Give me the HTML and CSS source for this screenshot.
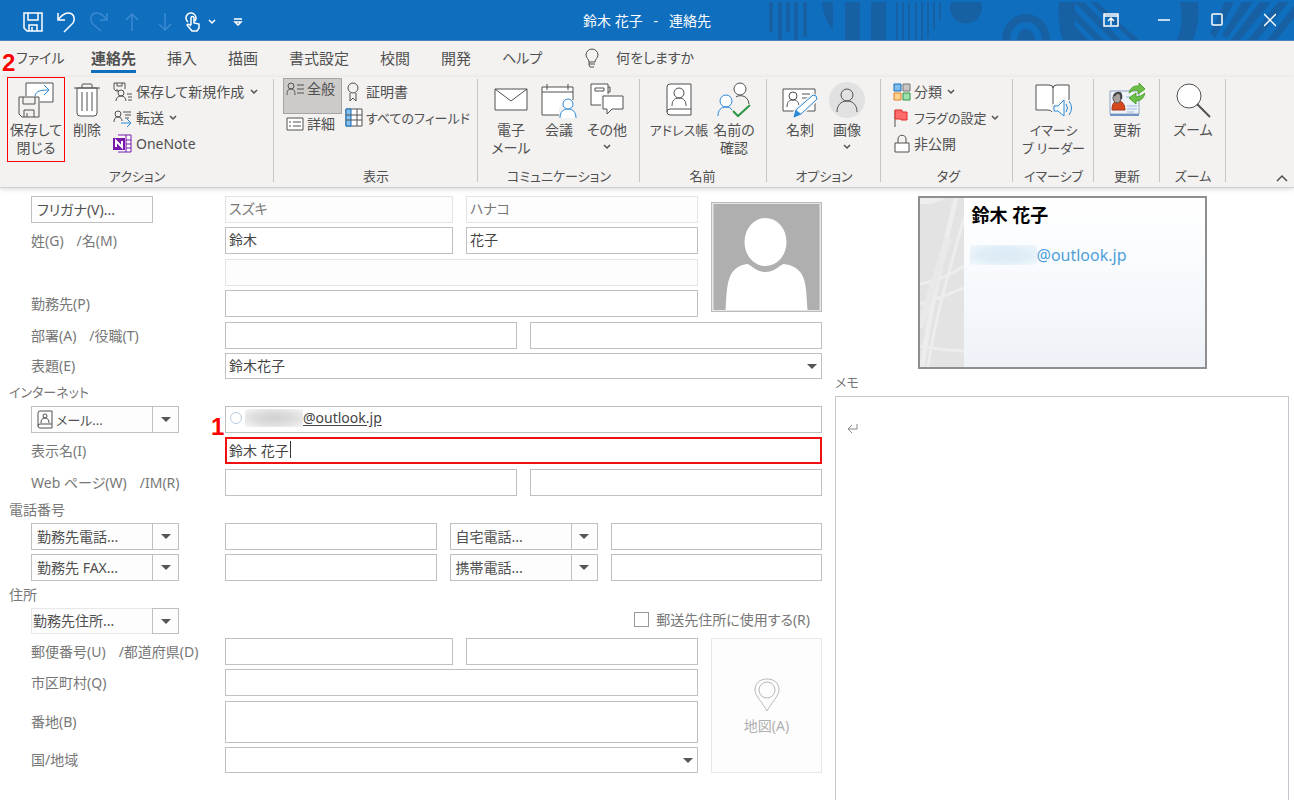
FILE: index.html
```html
<!DOCTYPE html>
<html lang="ja">
<head>
<meta charset="utf-8">
<title>鈴木 花子 - 連絡先</title>
<link rel="stylesheet" href="styles.css">
</head>
<body>
<header class="titlebar">
  <svg class="titlebar-art" width="534" height="40" viewBox="0 0 534 40" aria-hidden="true">
    <g fill="#1660a3">
      <path d="M9 2h4v30h-4zM18 2h4v38h-4zM26 2h4v30h-4zM34 2h4v38h-4zM43 2h4v35h-4z"/>
      <path d="M62 2h11v28C66 22 63 12 62 2z"/>
      <path d="M85 2h15v38H85zM111 2h15v38h-15z"/>
      <path d="M136 2h2v38h-2zM142 2h2v38h-2zM148 2h2v38h-2zM155 2h2v38h-2zM161 2h2v38h-2zM167 2h2v36h-2zM173 2h2v28h-2zM179 2h2v16l-2 3z"/>
      <path d="M191 2h30a16 16 0 1 1-30 0z"/>
      <path d="M242 40a24 26 0 0 1 48 0h-8a16 18 0 0 0-32 0z"/>
      <path d="M257 40a9 11 0 0 1 18 0z"/>
      <path d="M299 2h16v38h-12C298 28 298 14 299 2z"/>
      <path d="M315 2h9l37 38h-9l-37-37zM330 2h7l42 38h-8zM315 11l29 29h-9l-20-20zM315 26l13 14h-13z"/>
      <path d="M420 2h18c1 14 0 26-5 38h-16c5-12 6-24 3-38z"/>
      <path d="M465 2h9l-19 36-5-5zM482 2h11l-26 36-5-3zM500 2h11l-31 38h-9zM518 2h11l-32 38h-9zM534 6v12l-18 22h-9z"/>
    </g>
  </svg>
  <div class="qat">
    <button class="qat-btn save-btn" aria-label="上書き保存"><svg width="20" height="20" viewBox="0 0 20 20"><path d="M1 1h18v18H4l-3-3zM5 1v7h10V1M6 19v-6h8v6M9 15v4"/></svg></button>
    <button class="qat-btn" aria-label="元に戻す"><svg width="20" height="22" viewBox="0 0 20 22"><path d="M2 2v7h7M2 9C5 5 8 2 12 2c7 0 8 8 3 12l-7 7"/></svg></button>
    <button class="qat-btn off" aria-label="やり直し"><svg width="20" height="22" viewBox="0 0 20 22"><path d="M18 2v7h-7M18 9C15 5 12 2 8 2 1 2 0 10 5 14l7 6"/></svg></button>
    <button class="qat-btn off" aria-label="前のアイテム"><svg width="16" height="20" viewBox="0 0 16 20"><path d="M8 19V2M2 8l6-6 6 6"/></svg></button>
    <button class="qat-btn off" aria-label="次のアイテム"><svg width="16" height="20" viewBox="0 0 16 20"><path d="M8 1v17M2 12l6 6 6-6"/></svg></button>
    <button class="qat-btn touch" aria-label="タッチ/マウス モードの切り替え"><svg width="16" height="20" viewBox="0 0 16 20"><path d="M3 10a5 5 0 1 1 7-1M6 13V6c0-2 3-2 3 0v5l5 1v4l-2 3H7l-5-6c1-2 3 0 4 1"/></svg></button>
    <button class="qat-btn tiny" aria-label="タッチ オプション"><svg width="8" height="6" viewBox="0 0 8 6"><path d="M1 1l3 3 3-3"/></svg></button>
    <button class="qat-btn custom" aria-label="カスタマイズ"><svg width="10" height="8" viewBox="0 0 10 8"><path d="M1 1h8M2 4h6L5 7z"/></svg></button>
  </div>
  <h1 class="window-title">鈴木 花子&nbsp;&nbsp; -&nbsp;&nbsp; 連絡先</h1>
  <div class="window-controls">
    <button class="win-btn" aria-label="リボンの表示オプション"><svg width="16" height="14" viewBox="0 0 16 14"><path d="M1 1h14v12H1zM1 3h14M8 12V5M5 8l3-3 3 3"/></svg></button>
    <button class="win-btn" aria-label="最小化"><svg width="12" height="14" viewBox="0 0 12 14"><path d="M0 7h12"/></svg></button>
    <button class="win-btn" aria-label="最大化"><svg width="12" height="14" viewBox="0 0 12 14"><rect x="1" y="1" width="10" height="11" rx="1"/></svg></button>
    <button class="win-btn" aria-label="閉じる"><svg width="12" height="14" viewBox="0 0 12 14"><path d="M0 1l12 12M12 1L0 13"/></svg></button>
  </div>
</header>

<nav class="tabs">
  <span class="mark">2</span>
  <button class="tab file">ファイル</button>
  <button class="tab active">連絡先</button>
  <button class="tab">挿入</button>
  <button class="tab">描画</button>
  <button class="tab">書式設定</button>
  <button class="tab">校閲</button>
  <button class="tab">開発</button>
  <button class="tab help">ヘルプ</button>
  <button class="tell-me"><svg width="14" height="20" viewBox="0 0 14 20"><path d="M4 14c0-3-3-4-3-7a6 6 0 0 1 12 0c0 3-3 4-3 7zM4 16h6M5 19h4M4 14v3l1 2"/></svg>何をしますか</button>
</nav>

<section class="ribbon">
  <div class="group g-action">
    <div class="group-body">
      <button class="big save"><svg width="36" height="36" viewBox="0 0 36 36"><path fill="#fff" d="M8 14V1h27v19H22"/><path class="blue" d="M17 14c1-5 5-6 14-6M26 3l5 5-5 5"/><path fill="#f3f2f0" d="M1 15h20v20H4l-3-3z"/><path d="M5 15v7h12v-7M6 35v-7h10v7M9 31v4"/></svg><span>保存して<br>閉じる</span></button>
      <button class="big delete"><svg width="26" height="36" viewBox="0 0 26 36"><path fill="#fff" d="M3 6h20v25q0 3-3 3H6q-3 0-3-3z"/><path d="M0 6h26M8 6V3q0-1 1-1h8q1 0 1 1v3M8 10v19M13 10v19M18 10v19"/></svg><span>削除</span></button>
      <div class="stack">
        <button class="small"><svg width="20" height="20" viewBox="0 0 20 20"><path d="M6 9H3L1 7V1h11v6M4 1v3h5V1M4 9V7"/><circle cx="8" cy="11" r="3"/><path d="M3 19c0-3 2-5 5-5s5 2 5 5M14 12h5M15 15h4M15 18h4"/></svg>保存して新規作成<svg class="chev far" viewBox="0 0 8 6"><path d="M1 1l3 3 3-3"/></svg></button>
        <button class="small"><svg width="20" height="20" viewBox="0 0 20 20"><circle cx="5" cy="6" r="3"/><path d="M1 14c0-3 1-5 4-5s4 2 4 4M10 4h8M12 7h6M12 10h4"/><path class="blue" d="M8 15h10M14 11l4 4-4 4"/></svg>転送<svg class="chev" viewBox="0 0 8 6"><path d="M1 1l3 3 3-3"/></svg></button>
        <button class="small"><svg width="20" height="20" viewBox="0 0 20 20"><path stroke="#7719aa" fill="#fff" d="M5 1h13v17H5M13 6h5M13 10h5M13 14h5M13 1v17"/><path fill="#7719aa" stroke="none" d="M0 4h12v12H0z"/><path stroke="#fff" stroke-width="2" d="M3 13V7l6 6V7"/></svg>OneNote</button>
      </div>
    </div>
    <div class="group-name">アクション</div>
  </div>
  <div class="group g-show">
    <div class="group-body">
      <div class="view-stack">
        <button class="small view selected"><svg width="18" height="16" viewBox="0 0 18 16"><circle cx="5" cy="5" r="3"/><path d="M1 14c0-4 1-6 4-6s4 2 4 6M11 4h7M11 8h7M11 12h7"/></svg>全般</button>
        <button class="small view"><svg width="18" height="16" viewBox="0 0 18 16"><path fill="#fff" d="M1 2h16v12H1z"/><path d="M3 6h2M7 6h8M3 10h2M7 10h8"/></svg>詳細</button>
      </div>
      <div class="stack">
        <button class="small"><svg width="18" height="20" viewBox="0 0 18 20"><circle cx="8" cy="6" r="5"/><path d="M5 11v8l3-3 3 3v-8"/></svg>証明書</button>
        <button class="small kana"><svg width="18" height="20" viewBox="0 0 18 20"><path fill="#fff" d="M1 1h16v17H1z"/><path fill="#83beec" stroke="#106ebe" d="M1 1h5v17H1z"/><path d="M1 7h16M1 12h16M12 1v17"/></svg>すべてのフィールド</button>
      </div>
    </div>
    <div class="group-name">表示</div>
  </div>
  <div class="group g-comm">
    <div class="group-body">
      <button class="big w48"><svg width="34" height="36" viewBox="0 0 34 36"><path fill="#fff" d="M1 7h32v21H1z"/><path d="M1 7l16 12L33 7"/></svg><span>電子<br>メール</span></button>
      <button class="big w48"><svg width="36" height="36" viewBox="0 0 36 36"><path fill="#fff" d="M1 5h31v28H1z"/><path d="M1 10h31M6 2v6M27 2v6"/><path fill="#f3f2f0" stroke="none" d="M18 36V26l5-8h13v18z"/><path class="blue" fill="#fff" d="M19 36c0-6 3-9 8-9s8 3 8 9"/><circle class="blue" fill="#fff" cx="27" cy="22" r="5"/></svg><span>会議</span></button>
      <button class="big w48"><svg width="34" height="36" viewBox="0 0 34 36"><path fill="#fff" d="M1 2h17v21H1z"/><path d="M5 6h9v3H5zM20 5v5M18 5h2M18 10h2"/><path stroke="#f3f2f0" stroke-width="4" fill="#fff" d="M13 14h20v13H22l-5 5v-5h-4z"/><path fill="#fff" d="M13 14h20v13H22l-5 5v-5h-4z"/></svg><span>その他</span><svg class="chev" viewBox="0 0 8 6"><path d="M1 1l3 3 3-3"/></svg></button>
    </div>
    <div class="group-name">コミュニケーション</div>
  </div>
  <div class="group g-name">
    <div class="group-body">
      <button class="big w64 kana"><svg width="26" height="36" viewBox="0 0 26 36"><path fill="#fff" d="M4 2h21v31H4q-3 0-3-3V5q0-3 3-3z"/><path d="M1 30q0-3 3-3h21"/><circle cx="13" cy="11" r="5"/><path d="M6 24c0-5 2-8 7-8s7 3 7 8"/></svg><span>アドレス帳</span></button>
      <button class="big w46"><svg width="34" height="36" viewBox="0 0 34 36"><circle fill="#fff" cx="23" cy="7" r="6"/><path d="M19 15c2-2 12-3 13 7"/><circle class="blue" fill="#fff" cx="9" cy="19" r="6"/><path class="blue" d="M1 34c0-6 3-9 8-9 3 0 5 1 6 3"/><path stroke="#2e9547" stroke-width="2" d="M16 29l5 5 12-11"/></svg><span>名前の<br>確認</span></button>
    </div>
    <div class="group-name">名前</div>
  </div>
  <div class="group g-option">
    <div class="group-body">
      <button class="big w48"><svg width="36" height="36" viewBox="0 0 36 36"><path fill="#fff" d="M1 7h32v22H1z"/><circle cx="11" cy="14" r="4"/><path d="M5 25c0-5 2-7 6-7s6 2 6 7M20 12h8M20 16h6"/><path stroke="#f3f2f0" stroke-width="4" d="M12 35l2-7 17-15 4 4-16 15z"/><path class="blue" fill="#fff" d="M12 35l2-7 17-15q4 0 4 4L19 32z"/><path fill="#2b88d8" stroke="none" d="M12 35l2-7 5 4z"/></svg><span>名刺</span></button>
      <button class="big w46"><svg width="38" height="36" viewBox="0 0 38 36"><circle fill="#e1e1e1" stroke="none" cx="19" cy="18" r="18"/><circle cx="19" cy="13" r="6"/><path d="M9 30c0-7 4-11 10-11s10 4 10 11"/></svg><span>画像</span><svg class="chev" viewBox="0 0 8 6"><path d="M1 1l3 3 3-3"/></svg></button>
    </div>
    <div class="group-name">オプション</div>
  </div>
  <div class="group g-tag">
    <div class="group-body">
      <div class="stack">
        <button class="small"><svg width="18" height="20" viewBox="0 0 18 20"><path fill="#83beec" stroke="#106ebe" d="M1 2h7v7H1z"/><path fill="#c8c6c4" stroke="#797775" d="M10 2h7v7h-7z"/><path fill="#ffd590" stroke="#e97b27" d="M1 11h7v7H1z"/><path fill="#a1dfb0" stroke="#2e9547" d="M10 11h7v7h-7z"/></svg>分類<svg class="chev" viewBox="0 0 8 6"><path d="M1 1l3 3 3-3"/></svg></button>
        <button class="small kana"><svg width="18" height="20" viewBox="0 0 18 20"><path d="M2 2v17"/><path fill="#ff6b6b" stroke="#e02b2b" d="M2 2h7v2h5v8H8v-1H2z"/></svg>フラグの設定<svg class="chev" viewBox="0 0 8 6"><path d="M1 1l3 3 3-3"/></svg></button>
        <button class="small"><svg width="18" height="20" viewBox="0 0 18 20"><path fill="#fff" d="M2 9h14v9H2z"/><path d="M5 9V5c0-5 8-5 8 0v4"/></svg>非公開</button>
      </div>
    </div>
    <div class="group-name">タグ</div>
  </div>
  <div class="group g-reader center">
    <div class="group-body">
      <button class="big kana"><svg width="38" height="36" viewBox="0 0 38 36"><path fill="#fff" d="M18 30q-1-2-4-2H2V3h13q4 0 4 3 0-3 4-3h12v15"/><path d="M19 5v18"/><path stroke="#f3f2f0" stroke-width="4" d="M20 24h4l6-6v16l-6-5h-4z"/><path class="blue" fill="#fff" d="M20 24h4l6-6v16l-6-5h-4z"/><path class="blue" d="M32 22q3 4 0 8M35 19q5 7 0 14"/></svg><span>イマーシ<br>ブ リーダー</span></button>
    </div>
    <div class="group-name">イマーシブ</div>
  </div>
  <div class="group g-update center">
    <div class="group-body">
      <button class="big"><svg width="36" height="36" viewBox="0 0 36 36"><path fill="#eef3fa" stroke="#8fa3bd" d="M1 9h29v23H1z"/><path stroke="#6f93c4" stroke-width="2" d="M1 33h29"/><path fill="#d6491f" stroke="#a6330f" d="M3 28c0-6 2-9 6-9s7 3 7 9z"/><ellipse fill="#a9a19c" stroke="#555" cx="8" cy="16" rx="4" ry="5"/><path stroke="#444" stroke-width="2" d="M5 14q2-4 6-3 2 2 1 6"/><path stroke="#9db7dd" d="M17 15h4M18 24h10M18 27h10M18 30h7"/><path fill="#6cc04a" stroke="#4fa32f" d="M20 11q2-8 10-7V1l6 6-7 5V8q-5-1-9 3z"/><path fill="#6cc04a" stroke="#4fa32f" d="M36 11q-2 8-9 8v3l-7-6 7-5v4q5 0 9-4z"/></svg><span>更新</span></button>
    </div>
    <div class="group-name">更新</div>
  </div>
  <div class="group g-zoom center">
    <div class="group-body">
      <button class="big"><svg width="36" height="36" viewBox="0 0 36 36"><circle fill="#fff" cx="14" cy="14" r="12"/><path stroke-width="2" d="M22 22l13 13"/></svg><span>ズーム</span></button>
    </div>
    <div class="group-name">ズーム</div>
  </div>
  <button class="collapse" aria-label="リボンを折りたたむ"><svg width="12" height="8" viewBox="0 0 12 8"><path d="M1 7l5-5 5 5"/></svg></button>
</section>

<main class="contact">
  <form class="form">
    <div class="name-block">
      <div class="name-rows">
        <div class="row">
          <div class="label"><button type="button" class="push">フリガナ(V)...</button></div>
          <div class="fields two"><input class="box dim" aria-label="姓のフリガナ" value="スズキ" readonly><input class="box dim" aria-label="名のフリガナ" value="ハナコ" readonly></div>
        </div>
        <div class="row">
          <div class="label"><label for="sei">姓(G)</label><label for="mei">/名(M)</label></div>
          <div class="fields two"><input class="box" id="sei" value="鈴木"><input class="box" id="mei" value="花子"></div>
        </div>
        <div class="row loose">
          <div class="label"></div>
          <div class="fields"><input class="box dim" aria-label="会社名フリガナ" readonly></div>
        </div>
        <div class="row">
          <div class="label"><label for="company">勤務先(P)</label></div>
          <div class="fields"><input class="box" id="company"></div>
        </div>
      </div>
      <button type="button" class="photo" aria-label="連絡先の写真"><svg viewBox="0 0 106 106"><path fill="#afafaf" d="M0 0h106v106H0z"/><ellipse fill="#fff" cx="52" cy="38" rx="21" ry="24"/><path fill="#fff" d="M12 106c1-14 1-24 4-32 3-9 10-13 18-14 5 2 9 8 18 8s13-6 18-8c9 1 17 5 20 14 3 8 3 18 4 32z"/></svg></button>
    </div>
    <div class="row loose">
      <div class="label"><label for="dept">部署(A)</label><label for="job">/役職(T)</label></div>
      <div class="fields two"><input class="box" id="dept"><input class="box" id="job"></div>
    </div>
    <div class="row short">
      <div class="label"><label for="fileas">表題(E)</label></div>
      <div class="fields drop"><select class="box" id="fileas"><option>鈴木花子</option></select></div>
    </div>

    <h2 class="section kana">インターネット</h2>
    <div class="row first">
      <div class="label"><button type="button" class="push kana"><svg width="16" height="20" viewBox="0 0 16 20"><path d="M3 1h12v17H3q-2 0-2-2V3q0-2 2-2zM1 16q0-2 2-2h12"/><circle cx="8" cy="6" r="2"/><path d="M4 13c0-3 1-5 4-5s4 2 4 5"/></svg>メール...</button><button type="button" class="arrow" aria-label="メールの種類"></button></div>
      <div class="fields"><div class="box mail"><span class="presence"></span><span class="smudge"></span><a href="#">@outlook.jp</a></div></div>
    </div>
    <div class="row">
      <div class="label"><label for="display">表示名(I)</label></div>
      <div class="fields"><span class="mark">1</span><div class="box focus"><input id="display" value="鈴木 花子"><span class="caret"></span></div></div>
    </div>
    <div class="row loose">
      <div class="label"><label for="web">Web ページ(W)</label><label for="im">/IM(R)</label></div>
      <div class="fields two"><input class="box" id="web"><input class="box" id="im"></div>
    </div>

    <h2 class="section">電話番号</h2>
    <div class="row first">
      <div class="label"><button type="button" class="push">勤務先電話...</button><button type="button" class="arrow" aria-label="電話の種類 1"></button></div>
      <div class="fields phones"><input class="box" aria-label="勤務先電話"><div class="split"><button type="button" class="push">自宅電話...</button><button type="button" class="arrow" aria-label="電話の種類 2"></button></div><input class="box" aria-label="自宅電話"></div>
    </div>
    <div class="row">
      <div class="label"><button type="button" class="push">勤務先 FAX...</button><button type="button" class="arrow" aria-label="電話の種類 3"></button></div>
      <div class="fields phones"><input class="box" aria-label="勤務先 FAX"><div class="split"><button type="button" class="push">携帯電話...</button><button type="button" class="arrow" aria-label="電話の種類 4"></button></div><input class="box" aria-label="携帯電話"></div>
    </div>

    <h2 class="section">住所</h2>
    <div class="row short first">
      <div class="label"><button type="button" class="push flat">勤務先住所...</button><button type="button" class="arrow" aria-label="住所の種類"></button></div>
      <div class="fields mailing"><input type="checkbox" id="mailing"><label for="mailing">郵送先住所に使用する(R)</label></div>
    </div>
    <div class="address-block">
      <div class="name-rows">
        <div class="row">
          <div class="label"><label for="zip">郵便番号(U)</label><label for="pref">/都道府県(D)</label></div>
          <div class="fields two"><input class="box" id="zip"><input class="box" id="pref"></div>
        </div>
        <div class="row">
          <div class="label"><label for="city">市区町村(Q)</label></div>
          <div class="fields"><input class="box" id="city"></div>
        </div>
        <div class="row tall loose">
          <div class="label"><label for="street">番地(B)</label></div>
          <div class="fields"><textarea class="box" id="street"></textarea></div>
        </div>
        <div class="row short">
          <div class="label"><label for="country">国/地域</label></div>
          <div class="fields drop"><select class="box" id="country"><option></option></select></div>
        </div>
      </div>
      <button type="button" class="map" disabled><svg width="26" height="34" viewBox="0 0 26 34"><path d="M13 33C9 25 1 18 1 12 1 5 6 1 13 1s12 4 12 11c0 6-8 13-12 21z"/><circle cx="13" cy="12" r="8"/></svg>地図(A)</button>
    </div>
  </form>

  <aside class="side">
    <div class="card">
      <svg class="card-art" viewBox="0 0 44 169" preserveAspectRatio="none" aria-hidden="true"><path fill="#e3e3e4" d="M0 0h44v169H0z"/><g fill="none" stroke="#ededee"><path stroke-width="5" d="M36 0C24 50 10 110 2 169" /><path stroke-width="3" d="M44 20C30 70 15 120 8 169M0 86q24-4 44-18M0 106q20-6 44-16M0 148q20 4 44 5"/><path stroke-width="7" stroke="#e9e9ea" d="M28 40L0 130"/></g><path fill="#eeeeef" d="M0 0h26L12 6H0z"/></svg>
      <div class="card-text">
        <div class="card-name">鈴木 花子</div>
        <div class="card-mail"><span class="smudge"></span>@outlook.jp</div>
      </div>
    </div>
    <label class="memo-label kana" for="memo">メモ</label>
    <div class="memo-wrap">
      <textarea class="memo" id="memo"></textarea>
      <svg class="return" width="12" height="10" viewBox="0 0 12 10"><path d="M10 0v5H1M5 1L1 5l4 4"/></svg>
    </div>
  </aside>
</main>
</body>
</html>
```
FILE: styles.css
```css
* { box-sizing: border-box; }

body {
  margin: 0;
  min-height: 100vh;
  display: flex;
  flex-direction: column;
  background: #fff;
  color: #505050;
  font: 14px/18px "Noto Sans", "Noto Sans CJK JP", sans-serif;
  font-feature-settings: "palt";
}

button, input, select, textarea {
  font: inherit;
  font-feature-settings: inherit;
  color: inherit;
  margin: 0;
}

button {
  border: 0;
  padding: 0;
  background: none;
  white-space: nowrap;
}

svg { fill: none; stroke: #505050; flex: none; }
.blue { stroke: #2b88d8; }
.chev { width: 8px; height: 6px; stroke-width: 1.500; }

/* title bar */
.titlebar {
  position: relative;
  display: flex;
  height: 41px;
  background: #106ebe;
  border-bottom: 1px solid #4a83bd;
  color: #fff;
}
.titlebar-art { position: absolute; right: 0; top: 0; stroke: none; }
.titlebar button svg { stroke: #fff; stroke-width: 1.500; }
.qat { flex: 1; display: flex; }
.qat-btn { width: 33px; display: grid; place-items: center; padding-top: 4px; }
.save-btn { margin-left: 16px; }
.titlebar .off svg { stroke: #3a8ad2; }
.touch { width: 24px; }
.tiny { width: 14px; }
.custom { width: 38px; }
.window-title {
  margin: 0;
  font-size: 14px;
  font-weight: 400;
  line-height: 41px;
  position: relative;
}
.window-controls { position: relative; flex: 1; display: flex; justify-content: flex-end; gap: 5px; }
.win-btn { width: 48px; display: grid; place-items: center; }

/* tabs */
.tabs {
  position: relative;
  display: flex;
  gap: 1px;
  height: 36px;
  background: #f3f2f0;
  font-size: 15px;
}
.tab { padding: 0 15px; height: 34px; line-height: 34px; }
.tabs .file { width: 75px; padding: 0 0 0 16px; text-align: left; font-size: 14px; }
.active { position: relative; font-weight: 700; }
.active::after {
  content: "";
  position: absolute;
  left: 15px;
  right: 15px;
  bottom: 2px;
  height: 3px;
  background: #106ebe;
}
.help { width: 82px; text-align: left; font-size: 14px; }
.tell-me { display: flex; align-items: center; gap: 17px; height: 34px; margin-left: 15px; font-size: 14px; }
.mark {
  position: absolute;
  color: #f00;
  font: bold 24px/24px "Liberation Sans", sans-serif;
  text-shadow: 0 0 2px #fff, 0 0 2px #fff;
}
.tabs .mark { left: 2px; top: 10px; z-index: 1; }

/* ribbon */
.ribbon {
  position: relative;
  display: flex;
  height: 111px;
  background: #f3f2f0;
  border-bottom: 1px solid #d2d0ce;
  box-shadow: 0 1px 5px #d8d8d8;
}
.group {
  position: relative;
  display: flex;
  flex-direction: column;
  flex: 0 1 66px;
  min-width: 0;
}
.group::after {
  content: "";
  position: absolute;
  right: 0;
  top: 2px;
  height: 103px;
  width: 1px;
  background: #c8c6c4;
}
.g-action { flex-basis: 274px; padding-left: 7px; }
.g-show { flex-basis: 204px; padding-left: 9px; }
.g-comm { flex-basis: 162px; padding-left: 9px; }
.g-name { flex-basis: 127px; padding-left: 7px; }
.g-option { flex-basis: 114px; padding-left: 9px; }
.g-tag { flex-basis: 132px; padding-left: 12px; }
.g-reader { flex-basis: 81px; }
.group-body { display: flex; height: 89px; }
.center .group-body { justify-content: center; }
.group-name { font-size: 13px; line-height: 22px; text-align: center; white-space: nowrap; }
.g-action .group-name { padding-right: 7px; }
.g-show .group-name, .g-comm .group-name, .g-option .group-name, .g-name .group-name, .g-tag .group-name { padding-right: 9px; }
.kana { font-size: 13px; }

.big {
  display: flex;
  flex-direction: column;
  align-items: center;
  padding-top: 5px;
  height: 85px;
}
.big span { margin-top: 3px; }
.big .chev { margin-top: 5px; }
.save { width: 58px; padding-top: 4px; border: 1px solid #f00; }
.delete { width: 44px; }
.w46 { width: 46px; }
.w48 { width: 48px; }
.w64 { width: 64px; }
.stack { display: flex; flex-direction: column; padding-top: 2px; }
.g-action .stack { padding-left: 4px; }
.small { display: flex; align-items: center; gap: 3px; height: 26px; }
.small .chev { margin-left: 2px; }
.small .far { margin-left: 3px; }
.view-stack { width: 59px; padding-top: 1px; margin-right: 3px; }
.view { width: 59px; height: 20px; padding-left: 3px; }
.selected { height: 36px; align-items: flex-start; padding: 2px; background: #cdcbc9; border: 1px solid #a6a4a2; line-height: 16px; }
.collapse { margin: auto 6px 5px auto; line-height: 8px; }
.collapse svg { display: block; stroke-width: 1.500; }

/* contact form */
.contact { flex: 1; display: grid; grid-template-columns: minmax(804px, 835fr) minmax(300px, 459fr); }
.form { padding: 8px 13px 20px 31px; color: #777; }
.name-block, .address-block { display: flex; gap: 13px; }
.address-block { padding-top: 4px; }
.name-rows { flex: 1; }
.row { display: flex; height: 27px; margin-top: 4px; }
.row.loose { margin-top: 5px; }
.row.first, .name-rows .row:first-child { margin-top: 0; }
.row.short { height: 26px; }
.row.tall { height: 42px; }
.label { width: 194px; display: flex; align-items: center; white-space: nowrap; }
.label label + label { margin-left: 13px; }
.fields { position: relative; flex: 1; display: grid; gap: 13px; }
.two { grid-template-columns: 1fr 1fr; }
.name-rows .two { grid-template-columns: 228fr 232fr; }
.phones { grid-template-columns: 1fr 148px 1fr; }
.box {
  width: 100%;
  height: 100%;
  min-width: 0;
  border: 1px solid #c0c0c0;
  border-radius: 0;
  background: #fff;
  color: #444;
  padding: 0 3px 4px;
  resize: none;
  outline: 0;
}
.dim { border-color: #e4e4e4; background: #fdfdfd; color: #777; }
select.box { appearance: none; padding-bottom: 0; }
.drop::after {
  content: "";
  position: absolute;
  right: 5px;
  top: 11px;
  border: 5px solid transparent;
  border-top-color: #555;
  border-bottom: 0;
}
.push {
  width: 122px;
  height: 27px;
  display: flex;
  align-items: center;
  gap: 3px;
  padding: 0 5px;
  border: 1px solid #c0c0c0;
  background: #fdfdfd;
  color: #505050;
}
.arrow {
  width: 27px;
  height: 27px;
  margin-left: -1px;
  border: 1px solid #c0c0c0;
  background: #fdfdfd;
  display: grid;
  place-items: center;
}
.arrow::after { content: ""; border: 5px solid transparent; border-top-color: #555; border-bottom: 0; }
.short .push, .short .arrow { height: 26px; }
.flat { border-color: #e8e8e8; padding-left: 1px; }
.split { display: flex; }
.photo { width: 111px; height: 110px; margin-top: 6px; padding: 1px; border: 1px solid #bbb; background: #e6e6e6; }
.photo svg { display: block; width: 100%; height: 100%; stroke: none; }
.section { margin: 0 0 0 -22px; height: 27px; font-size: 14px; font-weight: 400; line-height: 27px; }
.section.kana { font-size: 13px; }
.mail { display: flex; align-items: center; padding-left: 4px; }
.mail a { color: #444; text-underline-offset: 2px; }
.presence { width: 12px; height: 12px; border: 1px solid #b9cbe0; border-radius: 50%; }
.smudge { display: inline-block; border-radius: 2px; }
.mail .smudge { width: 58px; height: 18px; margin-left: 3px; background: radial-gradient(ellipse, #d0d0d0, #dedede 50%, #f6f6f6); }
.box.focus { display: flex; align-items: center; border: 2px solid #f01010; padding: 0 2px 2px; }
.focus input { width: 61px; height: 19px; border: 0; padding: 0; outline: 0; background: none; }
.caret { width: 1px; height: 17px; background: #333; }
.fields .mark { left: -14px; top: -22px; }
.mailing { display: flex; align-items: center; justify-content: flex-end; gap: 7px; padding: 0 12px 3px 0; }
.mailing input { appearance: none; width: 15px; height: 15px; border: 1px solid #999; background: #fff; }
.map {
  width: 111px;
  height: 135px;
  display: flex;
  flex-direction: column;
  align-items: center;
  gap: 5px;
  padding-top: 39px;
  border: 1px solid #e8e8e8;
  background: #fdfdfd;
  color: #b0b0b0;
}
.map svg { stroke: #b8b8b8; }

/* card and memo */
.side { display: flex; flex-direction: column; padding: 8px 5px 0 0; color: #777; }
.card {
  width: 289px;
  height: 173px;
  display: flex;
  align-self: center;
  border: 2px solid #8f8f8f;
  background: linear-gradient(#fff, #f7fafd 50%, #eef2f8);
}
.card-art { width: 44px; height: 169px; stroke: none; }
.card-text { padding: 4px 6px; }
.card-name { color: #000; font-size: 18px; font-weight: 700; line-height: 26px; padding-left: 2px; }
.card-mail { display: flex; align-items: center; margin-top: 15px; color: #4f9fd8; font-size: 16px; line-height: 24px; }
.card-mail .smudge { width: 67px; height: 20px; background: radial-gradient(ellipse, #dbeaf6, #e0edf7 50%, #f2f8fc); }
.memo-label { line-height: 27px; }
.memo-wrap { position: relative; flex: 1; display: flex; }
.memo { width: 100%; border: 1px solid #c6c6ce; border-bottom: 0; border-radius: 0; resize: none; padding: 22px 12px; outline: 0; }
.return { position: absolute; left: 12px; top: 28px; stroke: #888; }
```
